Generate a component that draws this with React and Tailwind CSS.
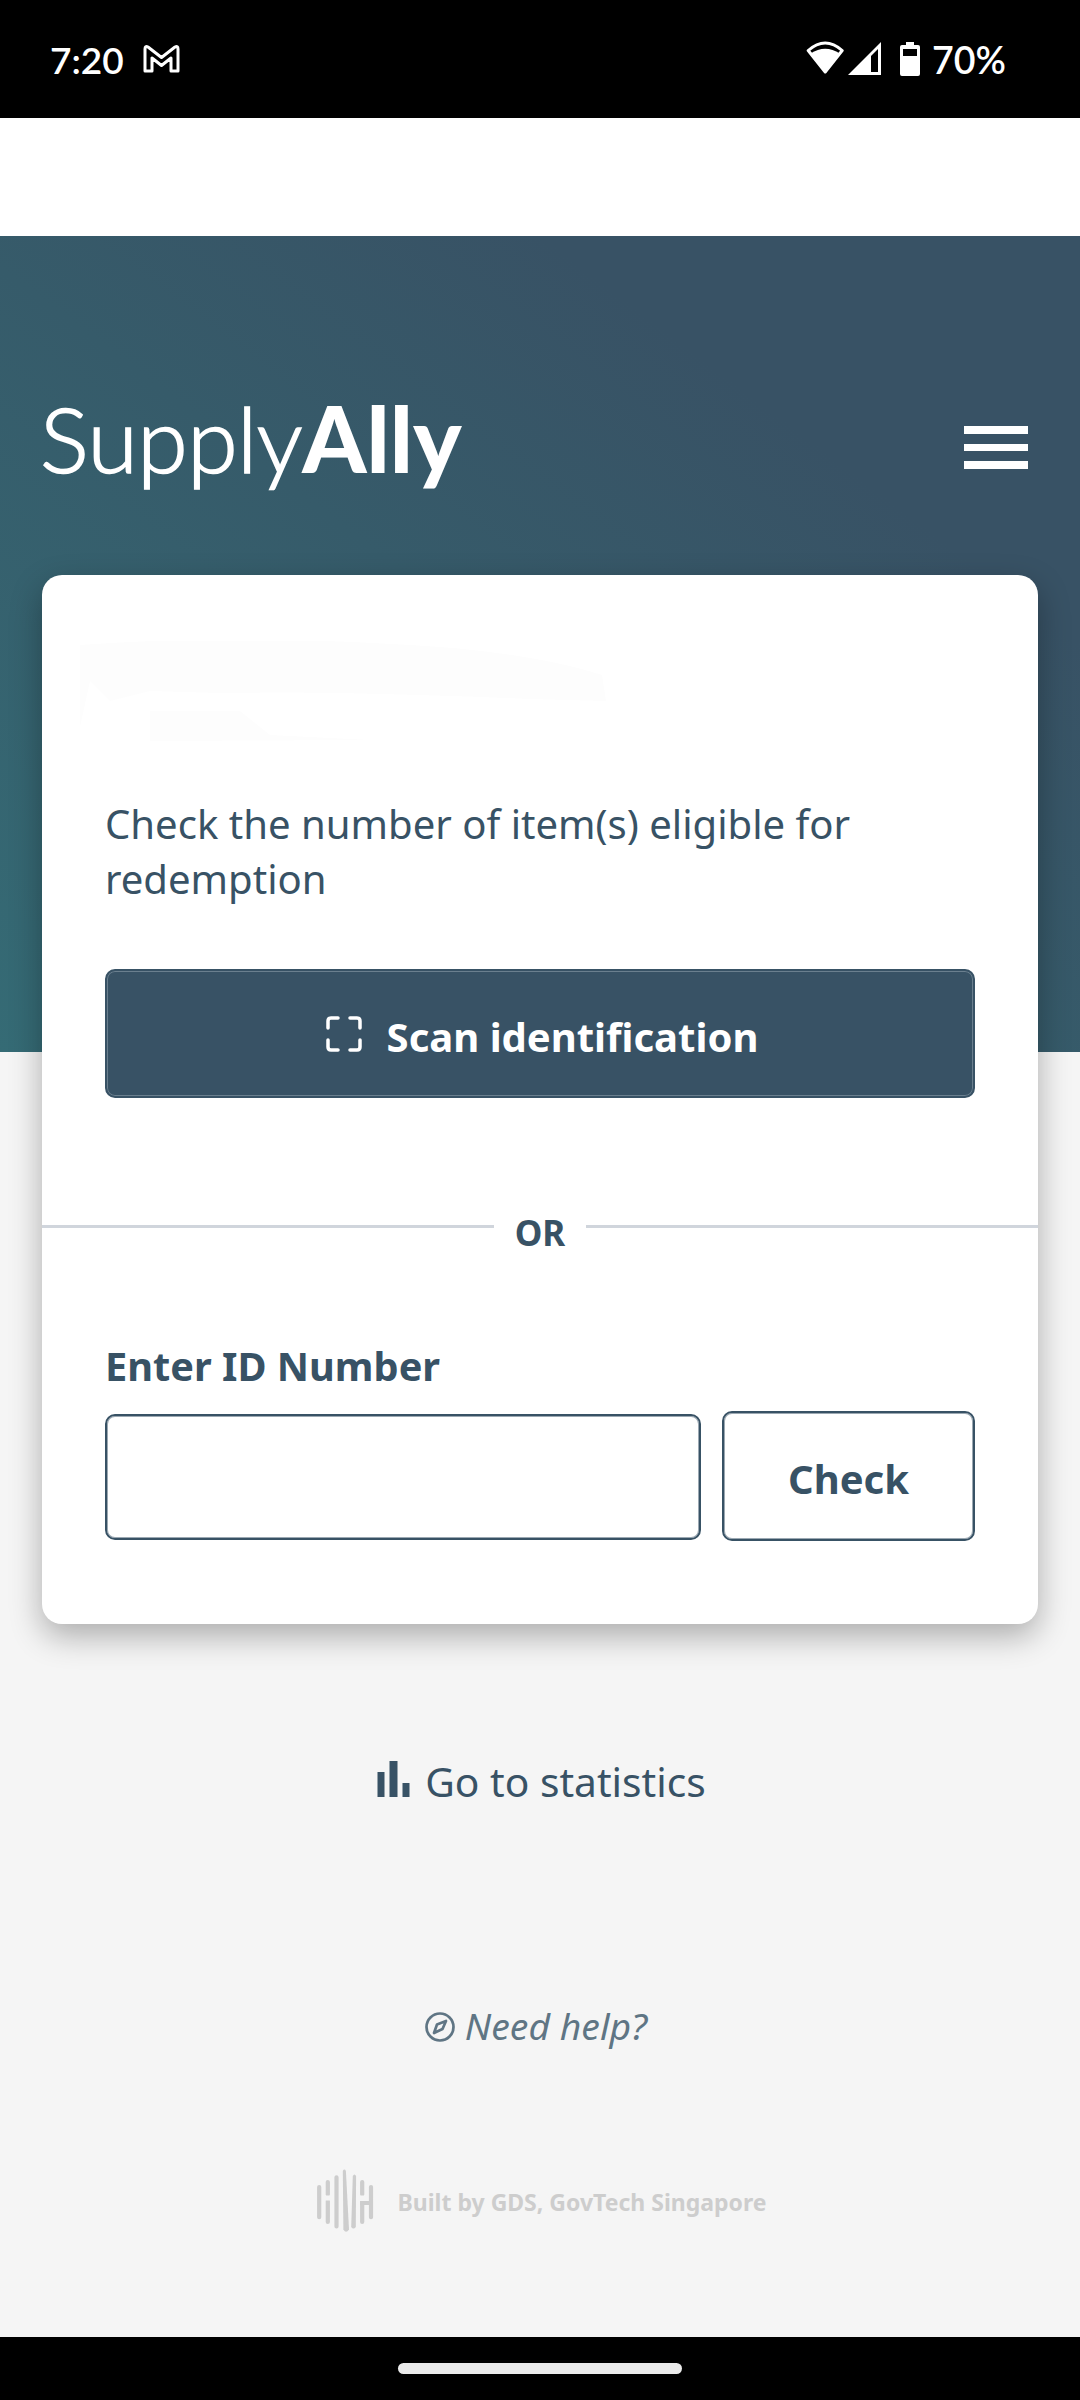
const Bars = () => (
  <svg className="h-[64px] w-[58px] shrink-0" viewBox="0 0 58 64" fill="none" stroke="#cdcdcd" strokeLinecap="round">
    <g strokeWidth="4.2">
      <path d="M3.200 18V48.200M11.800 53V31.500M20.500 8.300V57.500M46.200 53V33M55 18V48.200" />
      <path d="M11.800 13V25.500M46.200 13V25.500" />
    </g>
    <path d="M44.100 34H55" strokeWidth="4" strokeLinecap="butt" />
    <path d="M9 26.500H15V31.500H9ZM44 26.500H50V32H44Z" fill="#f5f5f5" stroke="none" />
    <path d="M26.800 2Q28.500 -.8 29.900 2L33 60.500Q30 65 27.400 60.500Z" fill="#cdcdcd" stroke="none" />
    <path d="M36.800 7Q38.400 4 40.100 7L39.800 58Q37.500 61 35.200 58Z" fill="#cdcdcd" stroke="none" />
  </svg>
);

export default function App() {
  return (
    <div className="flex h-[2400px] w-[1080px] flex-col overflow-hidden bg-[#f5f5f5] font-['Noto_Sans',sans-serif] text-[#385265]">
      <header className="flex h-[118px] shrink-0 items-center justify-between bg-black pl-[50px] pr-[74px] text-white">
        <div className="flex items-center gap-[19px]">
          <span className="pt-px font-[Lato,sans-serif] text-[37px] font-semibold leading-none">7:20</span>
          <svg className="h-[28px] w-[37px]" viewBox="0 0 37 28" fill="none" stroke="white" strokeWidth="3" strokeLinejoin="round">
            <path d="M2 26V4Q2 .5 5 2L18.500 12.500L32 2Q35 .5 35 4V26H28V13L18.500 20.500L9 13V26Z" />
          </svg>
        </div>
        <div className="flex items-center">
          <svg className="mr-[4px] h-[36px] w-[122px]" viewBox="0 0 122 36">
            <path d="M2.200 9.500Q19.200 -5.500 36.200 9.500L19.200 31Z" fill="none" stroke="white" strokeWidth="3" strokeLinejoin="round" />
            <path d="M4.500 12.500Q19.200 3 33.900 12.500L19.200 32Z" fill="white" />
            <path d="M42 34L75 1V34Z" fill="white" />
            <path d="M65 15L72 8V31H65Z" fill="black" />
            <path d="M100 1h8v3h4q2 0 2 2v27q0 2-2 2H96q-2 0-2-2V6q0-2 2-2h4Z" fill="white" />
            <path d="M97 8h14v7H97Z" fill="black" />
          </svg>
          <span className="pt-px font-[Lato,sans-serif] text-[37.500px] font-semibold leading-none">70%</span>
        </div>
      </header>
      <div className="h-[118px] shrink-0 bg-white" />
      <section className="h-[816px] shrink-0 bg-[linear-gradient(to_top_right,#356b75_0%,#365b6a_48%,#385265_75%,#385265_100%)] px-[42px] pt-[154px]">
        <div className="flex h-[120px] items-start justify-between">
          <h1 className="-ml-[2px] -mt-[7px] flex whitespace-nowrap font-[Lato,sans-serif] text-[91.500px] leading-[110px] text-white">
            <span className="font-light tracking-[-0.5px] [-webkit-text-stroke:1.6px_white]">Supply</span>
            <span className="font-black">Ally</span>
          </h1>
          <div className="mr-[10px] mt-[36px] flex w-[64px] flex-col gap-[10px]">
            <i className="h-[7.500px] bg-white" />
            <i className="h-[7.500px] bg-white" />
            <i className="h-[7.500px] bg-white" />
          </div>
        </div>
      </section>
      <main className="relative -mt-[477px] mx-[42px] flex h-[1049px] shrink-0 flex-col rounded-[20px] bg-white shadow-[0_12px_32px_rgba(0,0,0,0.3)]">
        <svg className="ml-[38px] mt-[66px] h-[100px] w-[560px] shrink-0" viewBox="0 0 560 100" fill="#fdfdfd">
          <path d="M0 4Q160-8 360 6Q460 14 522 34L526 60L450 58Q260 50 140 52L70 50L30 60L10 40L0 86ZM70 70L160 70L190 94L290 99L70 100Z" />
        </svg>
        <p className="mt-[55px] h-[110px] whitespace-nowrap px-[63px] text-[40.1px] leading-[55px]">
          Check the number of item(s) eligible for<br />redemption
        </p>
        <button className="mx-[63px] mt-[63px] flex h-[129px] shrink-0 items-center justify-center gap-[25px] rounded-[10px] border-2 border-[#385265] bg-[#385265] font-bold text-white shadow-[inset_0_0_0_1px_#6a7f8e]">
          <svg className="ml-[4px] h-[36px] w-[36px]" viewBox="0 0 36 36" fill="none" stroke="white" strokeWidth="3.500" strokeLinecap="round">
            <path d="M2 12V5Q2 2 5 2H12M24 2H31Q34 2 34 5V12M34 24V31Q34 34 31 34H24M12 34H5Q2 34 2 31V24" />
          </svg>
          <span className="pt-[7px] text-[40px]">Scan identification</span>
        </button>
        <div className="mt-[98px] flex h-[60px] items-center gap-[21px]">
          <i className="h-[3px] flex-1 bg-[#d0d5dc]" />
          <b className="pt-[14px] text-[35px]">OR</b>
          <i className="h-[3px] flex-1 bg-[#d0d5dc]" />
        </div>
        <label className="ml-[63px] mt-[83px] text-[39.7px] font-bold leading-[54px]">Enter ID Number</label>
        <div className="mx-[63px] mt-[18px] flex items-center gap-[21px]">
          <div className="mt-px h-[126px] w-[596px] rounded-[10px] border-2 border-[#385265] shadow-[inset_0_0_0_1px_#9ba8b2]" />
          <button className="h-[130px] flex-1 rounded-[10px] border-2 border-[#385265] pt-[6px] text-[40px] font-bold shadow-[inset_0_0_0_1px_#9ba8b2]">Check</button>
        </div>
      </main>
      <div className="mt-[127px] flex h-[60px] shrink-0 items-center justify-center gap-[15px] pl-[3px]">
        <svg className="mb-[4px] h-[36px] w-[33px]" viewBox="0 0 33 36" fill="#385265">
          <path d="M.5 11h7v25h-7zM12.500 0h8v36h-8zM25.500 22h7v14h-7z" />
        </svg>
        <span className="text-[40.700px] leading-[60px]">Go to statistics</span>
      </div>
      <div className="mt-[190px] flex h-[50px] shrink-0 items-center justify-center gap-[10px] pr-[8px] text-[#5f7584]">
        <svg className="mt-px h-[30px] w-[30px]" viewBox="0 0 30 30" fill="none" stroke="#5f7584" strokeWidth="2.700" strokeLinejoin="round">
          <circle cx="15" cy="15" r="13.500" />
          <path d="M21 9L17.500 17L9 21L12 12.500Z" />
        </svg>
        <span className="text-[37.300px] italic">Need help?</span>
      </div>
      <footer className="mt-[118px] flex h-[64px] shrink-0 items-center justify-center gap-[24px] pl-[2px] text-[#cdcdcd]">
        <Bars />
        <span className="pt-[2px] text-[23px] font-bold">Built by GDS, GovTech Singapore</span>
      </footer>
      <div className="mt-auto flex h-[63px] shrink-0 items-center justify-center bg-black">
        <i className="h-[11px] w-[284px] rounded-full bg-[#ebebeb]" />
      </div>
    </div>
  );
}
